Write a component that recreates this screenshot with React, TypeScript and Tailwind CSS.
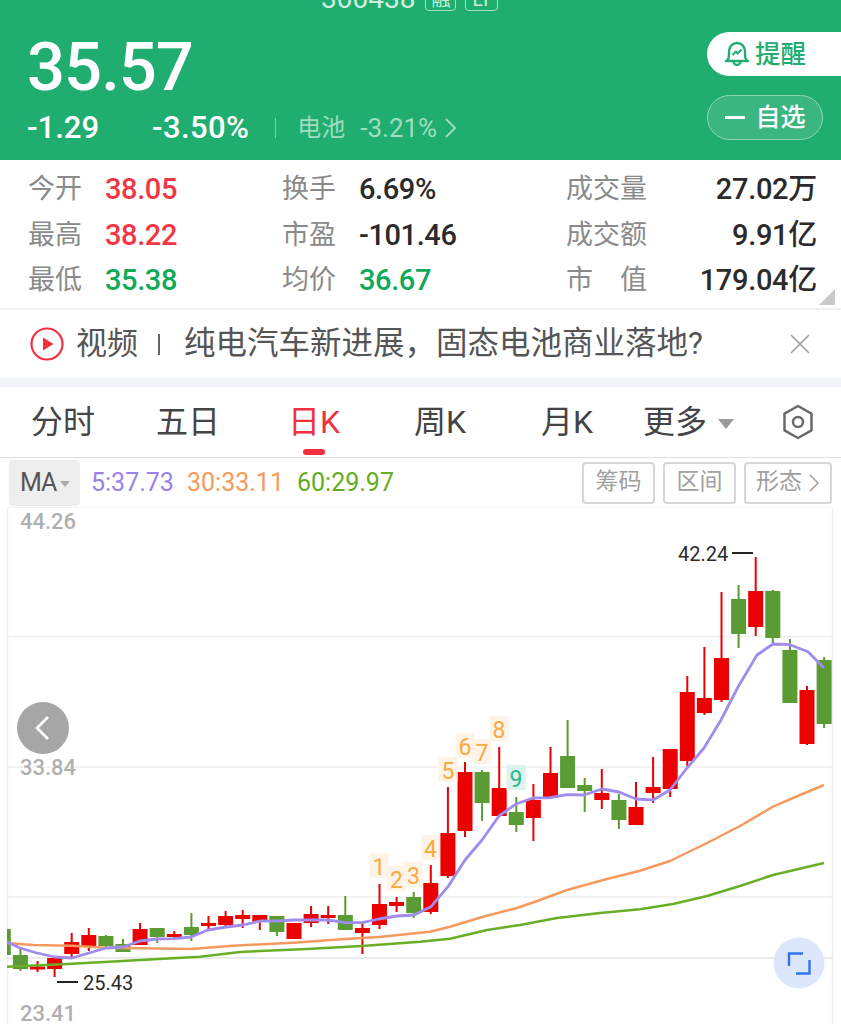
import React from "react";

const S = '"Roboto","Noto Sans CJK SC",sans-serif';

type C = [number, "r" | "g", number, number, number, number];
const raw: ["r" | "g", number, number, number, number][] = [
  ["g", 925, 929, 955, 955],
  ["g", 948, 955, 969, 971],
  ["r", 961, 966.5, 969.5, 972],
  ["r", 958, 958, 969, 977],
  ["r", 933, 942, 954, 958],
  ["r", 928, 935, 947, 951],
  ["g", 935, 936, 946, 947],
  ["g", 939, 944, 952, 952],
  ["r", 923, 929, 945, 945],
  ["g", 928, 928, 937, 943],
  ["r", 931, 934, 937, 939],
  ["g", 913, 927, 935, 941],
  ["r", 916, 923, 926, 929],
  ["r", 911, 916, 925, 927],
  ["r", 910, 915, 919, 928],
  ["r", 915, 915, 922, 930],
  ["g", 916, 916, 932, 936],
  ["r", 923, 923, 939, 939],
  ["r", 906, 914, 923, 927],
  ["r", 906, 915, 918, 924],
  ["g", 896, 915, 930, 930],
  ["r", 923, 928, 933, 954],
  ["r", 884, 904, 925, 929],
  ["r", 897, 902, 906, 912],
  ["g", 892, 897, 913, 918],
  ["r", 865, 883, 912, 914],
  ["r", 787, 833, 876, 878],
  ["r", 762, 772, 831, 837],
  ["g", 770, 772, 803, 821],
  ["r", 747, 788, 816, 816],
  ["g", 797, 812, 825, 832],
  ["r", 784, 800, 818, 841],
  ["r", 747, 773, 798, 798],
  ["g", 720, 756, 788, 788],
  ["g", 778, 785, 791, 812],
  ["r", 769, 793, 800, 809],
  ["g", 794, 800, 820, 829],
  ["r", 782, 807, 825, 825],
  ["r", 757, 787, 793, 803],
  ["r", 749, 749, 789, 797],
  ["r", 676, 692, 761, 766],
  ["r", 647, 698, 713, 715],
  ["r", 592, 658, 700, 702],
  ["g", 585, 599, 634, 648],
  ["r", 557, 591, 627, 636],
  ["g", 590, 591, 638, 645],
  ["g", 639, 650, 703, 703],
  ["r", 686, 690, 744, 745],
  ["g", 657, 660, 724, 728],
];
const candles: C[] = raw.map((c, i) => [3.3 + 17.1 * i, ...c] as C);

const ma5 =
  "7,942 20,948 37,953 55,957 72,958 89,953 106,948 123,947 140,941 157,939 174,938.7 191,937 208,930 226,927 243,925 260,921 277,921 294,920 311,920 328,920 345,922.7 362,922.7 379,919 397,916 414,915 431,906.7 448,886.7 465,860 482,840 499,816 516,804 533,798 550,797.7 567,794.7 584,795 602,789 619,792 636,799 653,800 670,790 687,768 704,748 721,720 738,687 757,655 773,644 790,644.7 808,651.7 824,668";
const ma30 =
  "7,943 33,945 72,945.7 106,947.7 140,948.3 191,949 233,945.7 293,942.7 345,939 379,937 430,931.7 450,926.7 483,916.7 517,908 540,900 567,890 607,879 640,870.7 670,861 707,843 740,826 773,806.7 800,795 824,785";
const ma60 =
  "7,966.7 67,964 127,960.7 200,956.7 240,952 307,949 362,946 420,941.7 450,938.7 487,930 520,925 557,918 600,913 640,909.3 673,904 707,896 740,886 773,875 824,863";

const magic: [string, number, number, boolean?][] = [
  ["1", 379, 867],
  ["2", 396.5, 880],
  ["3", 413.5, 876],
  ["4", 430.5, 849],
  ["5", 448, 771],
  ["6", 465, 747],
  ["7", 482, 753],
  ["8", 499, 730],
  ["9", 516, 779, true],
];

const Stat = ({ label, value, color }: { label: string; value: string; color: string }) => (
  <div className="flex items-center">
    <span className="w-[77px] text-[27px] leading-[45.5px] text-[#8a8a8a]">{label}</span>
    <span className={`text-[29px] leading-[45.5px] font-medium tracking-[-0.4px] ${color}`}>{value}</span>
  </div>
);

const Wide = ({ label, value }: { label: React.ReactNode; value: string }) => (
  <div className="flex items-center justify-between">
    <span className="text-[27px] leading-[45.5px] text-[#8a8a8a]">{label}</span>
    <span className="text-[29px] leading-[45.5px] font-medium tracking-[-0.3px] text-[#2b2b2b]">{value}</span>
  </div>
);

const Tab = ({ t, w, active }: { t: string; w: string; active?: boolean }) => (
  <div className={`relative flex h-full items-center justify-center text-[32px] ${w} ${active ? "text-[#f0303f]" : "text-[#444444]"}`}>
    {t}
    {active && <div className="absolute bottom-[2px] h-[6px] w-[22px] rounded-full bg-[#f0303f]" />}
  </div>
);

const Tool = ({ children, w }: { children: React.ReactNode; w: string }) => (
  <div className={`flex h-[42px] items-center justify-center rounded-[4px] border-2 border-[#d6d6d6] text-[23px] text-[#a0a0a0] ${w}`}>
    {children}
  </div>
);

export default function App() {
  return (
    <div className="h-[1024px] w-[841px] overflow-hidden bg-white" style={{ fontFamily: S }}>
      {/* header */}
      <div className="relative flex h-[160px] justify-between bg-[#1fae70] pl-[27px] text-white">
        <div className="absolute left-[321px] top-[-13px] flex items-center text-[#cfeee0]">
          <span className="text-[28px] leading-[24px]">300438</span>
          <span className="ml-[10px] flex h-[23px] w-[31px] items-end justify-center rounded-[4px] border border-[#a9e0c6] text-[19px] leading-[20px]">融</span>
          <span className="ml-[9px] flex h-[23px] w-[33px] items-end justify-center rounded-[4px] border border-[#a9e0c6] text-[19px] leading-[20px]">LT</span>
        </div>
        <div className="flex flex-col">
          <div className="mt-[29px] text-[67px] font-medium leading-[76px] tracking-[-1px]">35.57</div>
          <div className="flex items-center text-[31px] leading-[46px]">
            <span className="w-[125px] font-medium">-1.29</span>
            <span className="font-medium tracking-[0.4px]">-3.50%</span>
            <span className="ml-[26px] h-[20px] w-px bg-[#7fd0aa]" />
            <span className="ml-[21px] text-[24px] text-[#a0dcc0]">电池</span>
            <span className="ml-[15px] text-[26px] text-[#a0dcc0]">-3.21%</span>
            <svg width="14" height="22" viewBox="0 0 14 22" className="ml-[7px]" fill="none" stroke="#a0dcc0" strokeWidth="1.8">
              <path d="M2 2l9 9-9 9" />
            </svg>
          </div>
        </div>
        <div className="flex flex-col items-end pt-[32px]">
          <div className="flex h-[44px] w-[134px] items-center rounded-l-[22px] bg-white pl-[17px] text-[25.500px] font-medium text-[#1fae70]">
            <svg width="26" height="26" viewBox="0 0 26 26" fill="none" stroke="#1fae70" strokeWidth="2.400" className="mr-[5px]">
              <path d="M2 20c2.500-1 3-3 3-6.500V10a8 8 0 0116 0v3.500c0 3.500.5 5.500 3 6.500z" strokeLinejoin="round" />
              <path d="M9.500 20.500a3.500 3.500 0 007 0" />
              <path d="M8.500 14l3.500-3.500 1.500 2 4-4" strokeWidth="2" />
            </svg>
            提醒
          </div>
          <div className="mr-[18px] mt-[19px] flex h-[45px] w-[116px] items-center justify-center gap-[10px] rounded-[23px] border border-[#8fd6b5] bg-[#3cb681] pl-[1px] text-[25px] font-medium">
            <span className="h-[3px] w-[20px] bg-white" />
            自选
          </div>
        </div>
      </div>

      {/* stats */}
      <div className="relative flex h-[150px] border-b-[2px] border-[#f0f0f2] pl-[28px] pt-[7px]">
        <div className="w-[254px]">
          <Stat label="今开" value="38.05" color="text-[#f23645]" />
          <Stat label="最高" value="38.22" color="text-[#f23645]" />
          <Stat label="最低" value="35.38" color="text-[#0fa958]" />
        </div>
        <div className="w-[284px]">
          <Stat label="换手" value="6.69%" color="text-[#2b2b2b]" />
          <Stat label="市盈" value="-101.46" color="text-[#2b2b2b]" />
          <Stat label="均价" value="36.67" color="text-[#0fa958]" />
        </div>
        <div className="w-[251px]">
          <Wide label="成交量" value="27.02万" />
          <Wide label="成交额" value="9.91亿" />
          <Wide
            label={
              <span className="flex w-[81px] justify-between">
                <span>市</span>
                <span>值</span>
              </span>
            }
            value="179.04亿"
          />
        </div>
        <div className="absolute bottom-[3px] right-[6px] h-0 w-0 border-b-[16px] border-l-[16px] border-b-[#c9c9c9] border-l-transparent" />
      </div>

      {/* news */}
      <div className="flex h-[68px] items-center pl-[30px] pr-[30px] text-[31px] text-[#555555]">
        <svg width="34" height="34" viewBox="0 0 34 34" fill="none" className="mr-[12px]">
          <circle cx="17" cy="17" r="15.500" stroke="#f0303f" strokeWidth="2.200" />
          <path d="M13 10.500l10.500 6.500-10.500 6.500z" fill="#f0303f" />
        </svg>
        <span>视频</span>
        <span className="ml-[20px] h-[21px] w-[2px] bg-[#666666]" />
        <span className="ml-[24px] flex-1 whitespace-nowrap text-[31.500px]">{"纯电汽车新进展\uFF0C固态电池商业落地?"}</span>
        <svg width="22" height="22" viewBox="0 0 22 22" stroke="#9a9a9a" strokeWidth="1.600">
          <path d="M2 2l18 18M20 2L2 20" />
        </svg>
      </div>
      <div className="h-[9px] bg-[#f3f4f8]" />

      {/* tabs */}
      <div className="flex h-[71px] items-center border-b-[1px] border-[#dddddd] pl-[3px]">
        <Tab t="分时" w="w-[120px]" />
        <Tab t="五日" w="w-[130px]" />
        <Tab t="日K" w="w-[122px]" active />
        <Tab t="周K" w="w-[130px]" />
        <Tab t="月K" w="w-[124px]" />
        <div className="ml-[14px] flex items-center text-[32px] text-[#444444]">
          更多
          <div className="ml-[11px] mt-[3px] h-0 w-0 border-x-[8px] border-t-[10px] border-x-transparent border-t-[#999999]" />
        </div>
        <svg width="34" height="38" viewBox="0 0 34 38" fill="none" stroke="#6a6a6a" strokeWidth="2.500" className="ml-[47px]">
          <path d="M17 3l13.500 7.700v16.600L17 35 3.500 27.300V10.700z" strokeLinejoin="round" />
          <circle cx="17" cy="19" r="5" />
        </svg>
      </div>

      {/* indicators */}
      <div className="flex h-[49px] items-center pl-[9px] text-[25px]">
        <div className="flex h-[46px] w-[71px] items-center rounded-[4px] bg-[#eeeeee] pl-[11px] text-[25px] text-[#555555]">
          <span className="tracking-[-1px]">MA</span>
          <span className="ml-[4px] mt-[2px] h-0 w-0 border-x-[5px] border-t-[6px] border-x-transparent border-t-[#aaaaaa]" />
        </div>
        <span className="ml-[11px] w-[96px] text-[#9a82e8]">5:37.73</span>
        <span className="w-[110px] text-[#f69a5c]">30:33.11</span>
        <span className="text-[#64ad22]">60:29.97</span>
        <div className="ml-auto mr-[9px] flex gap-[8px]">
          <Tool w="w-[73px]">筹码</Tool>
          <Tool w="w-[73px]">区间</Tool>
          <Tool w="w-[88px]">
            形态
            <svg width="12" height="20" viewBox="0 0 12 20" fill="none" stroke="#a0a0a0" strokeWidth="1.500" className="ml-[6px]">
              <path d="M2 2l8 8-8 8" />
            </svg>
          </Tool>
        </div>
      </div>

      {/* chart */}
      <svg width="841" height="517" viewBox="0 507 841 517" className="block" fontFamily={S}>
        <defs>
          <clipPath id="plot">
            <rect x="7" y="507" width="826" height="517" />
          </clipPath>
        </defs>
        <g stroke="#efefef" strokeWidth="1.500" fill="none">
          <path d="M7 507H833M7 636.500H833M7 767H833M7 897H833" />
          <path d="M7.500 507V1024M832.500 507V1024" />
        </g>
        <path d="M7 958H833" stroke="#e4e4e4" strokeWidth="1.500" />
        <text x="20" y="529" fontSize="22" fill="#b0b0b0" fontWeight="500">44.26</text>
        <text x="20" y="775" fontSize="22" fill="#b0b0b0" fontWeight="500">33.84</text>
        <text x="20" y="1021" fontSize="22" fill="#b0b0b0" fontWeight="500">23.41</text>
        <g clipPath="url(#plot)">
          {candles.map(([x, c, wt, bt, bb, wb], i) => {
            const col = c === "r" ? "#eb0000" : "#5a9b33";
            return (
              <g key={i} fill={col}>
                <rect x={x - 1} y={wt} width="2" height={wb - wt} />
                <rect x={x - 7.5} y={bt} width="15" height={bb - bt} />
              </g>
            );
          })}
        </g>
        <polyline points={ma30} fill="none" stroke="#f59a5e" strokeWidth="2.500" strokeLinejoin="round" />
        <polyline points={ma60} fill="none" stroke="#68ae26" strokeWidth="2.500" strokeLinejoin="round" />
        <polyline points={ma5} fill="none" stroke="#a08cec" strokeWidth="2.800" strokeLinejoin="round" />
        {magic.map(([t, x, y, green]) => (
          <g key={t}>
            <rect x={x - 9.500} y={y - 14} width="19" height="25" fill={green ? "#dbf3ea" : "#fdf3e6"} />
            <text x={x} y={y + 8} fontSize="23" textAnchor="middle" fill={green ? "#2fb58a" : "#f8a93f"}>{t}</text>
          </g>
        ))}
        <path d="M57 982H78" stroke="#222222" strokeWidth="2" />
        <text x="83" y="990" fontSize="20" fill="#2b2b2b">25.43</text>
        <path d="M732 553H753" stroke="#222222" strokeWidth="2" />
        <text x="678" y="561" fontSize="20" fill="#2b2b2b">42.24</text>
        <circle cx="43" cy="728" r="26" fill="#a6a6a6" />
        <path d="M48 717l-11 11 11 11" fill="none" stroke="#ffffff" strokeWidth="2.800" />
        <circle cx="799" cy="963" r="25.500" fill="#dce7fb" />
        <path d="M803 953.500H789V966M796 973.500H809.500V960" fill="none" stroke="#2f74f0" strokeWidth="2.400" />
      </svg>
    </div>
  );
}
